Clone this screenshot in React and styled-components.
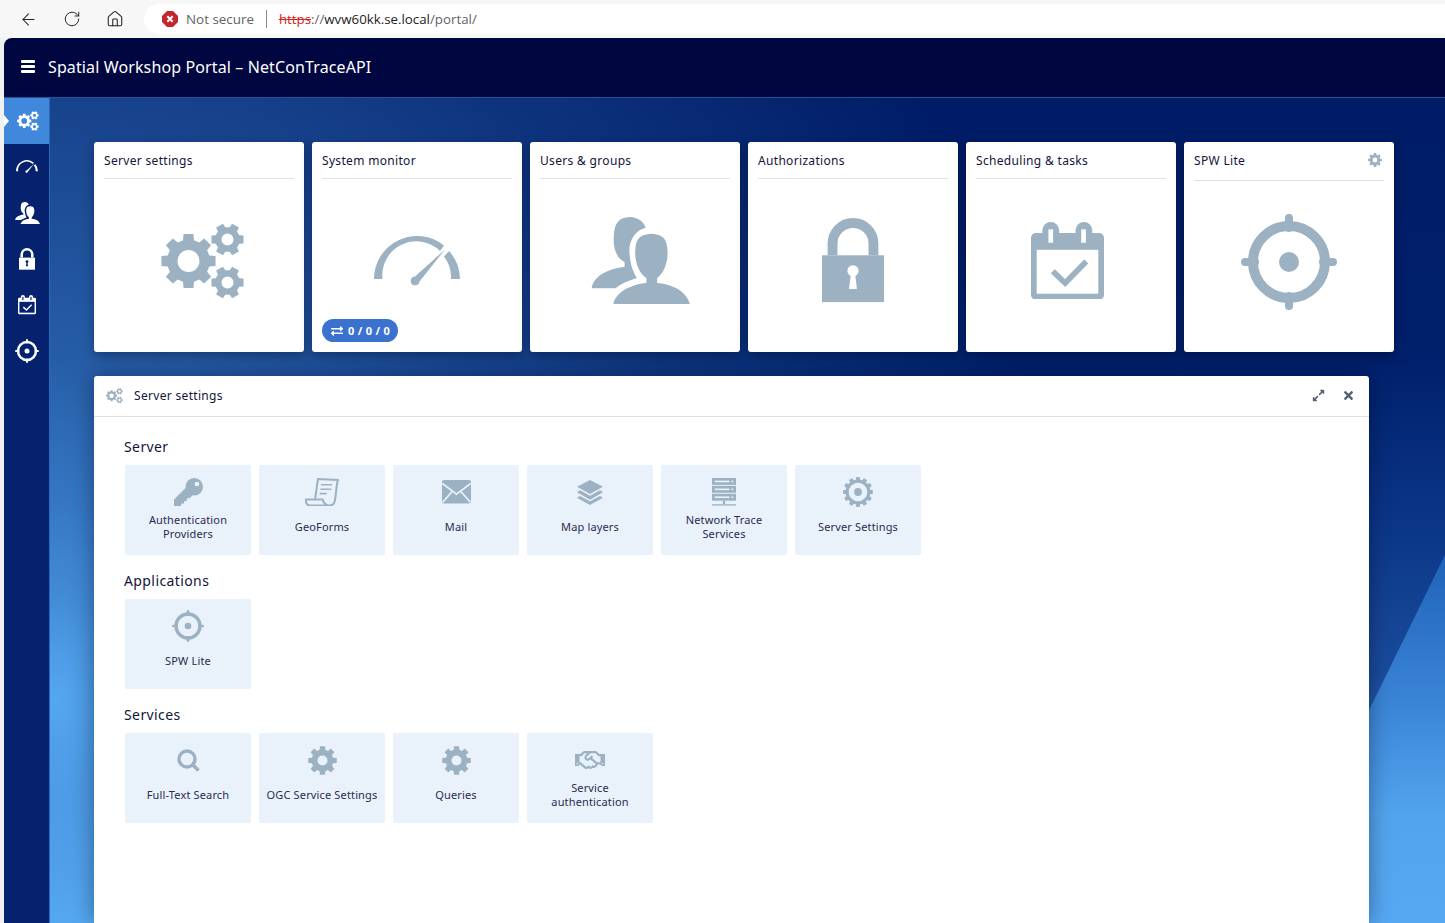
import React from 'react';
import styled, { createGlobalStyle } from 'styled-components';
import { ArrowLeft, RotateCw, Home } from 'lucide-react';
import { FaExchangeAlt, FaExpandAlt, FaTimes, FaRegHandshake } from 'react-icons/fa';

const GlobalStyle = createGlobalStyle`
  html, body {
    margin: 0;
    padding: 0;
    height: 100%;
    overflow: hidden;
    font-family: "Noto Sans", "Open Sans", sans-serif;
  }
  * {
    box-sizing: border-box;
  }
`;

const ICON = '#9cb2c3';
const TILE = '#e9f2fb';

// builds a toothed wheel outline, with a hole when one is given
function gearPath(cx, cy, outer, inner, teeth, hole, offset = 0) {
  const step = (Math.PI * 2) / teeth;
  const pts = [];
  for (let i = 0; i < teeth; i++) {
    const a = offset + i * step - Math.PI / 2;
    const w = step * 0.23;
    const f = step * 0.33;
    pts.push([a - f, inner], [a - w, outer], [a + w, outer], [a + f, inner]);
  }
  const d = pts
    .map(([a, r], i) => `${i ? 'L' : 'M'}${(cx + r * Math.cos(a)).toFixed(2)} ${(cy + r * Math.sin(a)).toFixed(2)}`)
    .join(' ');
  const h = hole ? ` M${cx - hole} ${cy} a${hole} ${hole} 0 1 0 ${hole * 2} 0 a${hole} ${hole} 0 1 0 ${-hole * 2} 0Z` : '';
  return `${d}Z${h}`;
}

const Gears = ({ size, color = ICON }) => (
  <svg width={size} viewBox="0 0 84 76" fill={color} fillRule="evenodd">
    <path d={gearPath(27.5, 38, 27.5, 21.5, 8, 11)} />
    <path d={gearPath(66.5, 16.5, 16.5, 12.5, 6, 6, Math.PI / 6)} />
    <path d={gearPath(66.5, 59.5, 16.5, 12.5, 6, 6, Math.PI / 6)} />
  </svg>
);

const Gauge = ({ size, color = ICON }) => (
  <svg width={size} viewBox="0 0 86 52" fill={color}>
    <path d="M0 44 A43 43 0 0 1 70 10.5 L66 16 A34 34 0 0 0 8.5 44Z" />
    <path d="M75 16 A43 43 0 0 1 86 44 L77 44 A34 34 0 0 0 70 21.5Z" />
    <path d="M41 41.5 L71 14.5 L45.5 46.5 A4.4 4.4 0 1 1 41 41.5Z" />
  </svg>
);

const Users = ({ size, color = ICON }) => (
  <svg width={size} viewBox="0 0 295 262" fill={color}>
    <path d="M2 212 C8 175 50 155 100 148 L100 135 C75 120 65 95 68 55 C70 15 85 2 115 0 C140 0 158 15 163 32 C130 40 110 75 115 110 C117 140 125 165 137 182 C110 190 88 200 73 212Z" />
    <path d="M66 262 C72 225 120 200 165 197 L165 182 C140 165 130 130 132 100 C133 65 145 52 180 50 C215 52 226 65 228 100 C230 130 220 165 197 182 L197 197 C245 200 288 225 295 262Z" />
  </svg>
);

const Lock = ({ size, color = ICON, hole = '#fff' }) => (
  <svg width={size} viewBox="0 0 188 255">
    <path d="M32 113 V77 A62 62 0 0 1 156 77 V113" fill="none" stroke={color} strokeWidth="30" />
    <rect y="113" width="188" height="142" fill={color} />
    <circle cx="94" cy="160" r="17" fill={hole} />
    <path d="M88 165 H100 L106 215 H82Z" fill={hole} />
  </svg>
);

const Calendar = ({ size, color = ICON, hole = '#fff' }) => (
  <svg width={size} viewBox="0 0 218 232">
    <rect y="33" width="218" height="199" rx="14" fill={color} />
    <rect x="17" y="83" width="184" height="131" fill={hole} />
    <rect x="34" width="50" height="70" rx="25" fill={color} />
    <rect x="133" width="50" height="70" rx="25" fill={color} />
    <rect x="52" y="22" width="14" height="40" fill={hole} />
    <rect x="150" y="22" width="14" height="40" fill={hole} />
    <path d="M65 147 L102 182 L165 118" fill="none" stroke={color} strokeWidth="17" />
  </svg>
);

const Target = ({ size, color = ICON }) => (
  <svg width={size} viewBox="0 0 96 96">
    <circle cx="48" cy="48" r="36" fill="none" stroke={color} strokeWidth="10" />
    <circle cx="48" cy="48" r="10" fill={color} />
    <path d="M48 4 V14 M48 82 V92 M4 48 H14 M82 48 H92" stroke={color} strokeWidth="8" strokeLinecap="round" />
  </svg>
);

const Cog = ({ size, color = ICON }) => (
  <svg width={size} viewBox="0 0 58 58" fill={color} fillRule="evenodd">
    <path d={gearPath(29, 29, 29, 22, 8, 10)} />
  </svg>
);

const GearRing = ({ size, color = ICON }) => (
  <svg width={size} viewBox="0 0 58 58" fill={color}>
    <path fillRule="evenodd" d={gearPath(29, 29, 29, 24, 12, 18, 0)} />
    <circle cx="29" cy="29" r="7.5" />
  </svg>
);

const Key = ({ size }) => (
  <svg width={size} viewBox="0 0 86 84" fill={ICON}>
    <path fillRule="evenodd" d="M60 0 A26 26 0 1 1 60 52 A26 26 0 1 1 60 0Z M68 11 A7 7 0 1 0 68 25 A7 7 0 1 0 68 11Z" />
    <path d="M42 22 L0 64 V84 H20 L22 76 H30 V68 H38 V60 H46 L64 42Z" />
  </svg>
);

const Scroll = ({ size }) => (
  <svg width={size} viewBox="0 0 100 84" fill="none" stroke={ICON} strokeWidth="6">
    <path d="M30 60 L38 3 L97 6 C92 20 92 45 88 66 C86 78 78 82 68 81 H16 C7 81 1 74 3 63 H52 C54 72 60 78 68 81" />
    <path d="M47 20 H80 M45 33 H78 M43 46 H64" strokeWidth="4.5" />
  </svg>
);

const Mail = ({ size }) => (
  <svg width={size} viewBox="0 0 86 70">
    <rect width="86" height="70" rx="6" fill={ICON} />
    <path d="M1 10 L43 42 L85 10 M2 66 L30 34 M84 66 L56 34" fill="none" stroke={TILE} strokeWidth="5" />
  </svg>
);

const Layers = ({ size }) => (
  <svg width={size} viewBox="0 0 78 75" fill={ICON}>
    <path d="M39 0 L78 20 L39 42 L0 20Z" />
    <path d="M9 31 L39 47 L69 31 L78 37 L39 59 L0 37Z" />
    <path d="M9 48 L39 64 L69 48 L78 53 L39 75 L0 53Z" />
  </svg>
);

const Rack = ({ y }) => (
  <>
    <rect y={y} width="73" height="21" fill={ICON} />
    <rect x="8" y={y + 8} width="45" height="5" fill={TILE} />
    <circle cx="62" cy={y + 10.5} r="3" fill={TILE} />
  </>
);

const Servers = ({ size }) => (
  <svg width={size} viewBox="0 0 73 85" fill={ICON}>
    <Rack y={0} />
    <Rack y={24} />
    <Rack y={48} />
    <rect x="33" y="69" width="7" height="11" />
    <rect y="80" width="73" height="4" />
  </svg>
);

const Search = ({ size }) => (
  <svg width={size} viewBox="0 0 23 23" fill="none" stroke={ICON}>
    <circle cx="10" cy="10" r="8" strokeWidth="3.4" />
    <path d="M15.5 15.5 L21.5 21.5" strokeWidth="3.6" />
  </svg>
);

const NotSecure = () => (
  <svg width="16" height="16" viewBox="0 0 16 16">
    <path d="M5 0 H11 L16 5 V11 L11 16 H5 L0 11 V5Z" fill="#c4262e" />
    <path d="M5.3 5.3 L10.7 10.7 M10.7 5.3 L5.3 10.7" stroke="#fff" strokeWidth="2" />
  </svg>
);

const Burger = () => (
  <svg width="14" height="13" viewBox="0 0 14 13" fill="#fff">
    <rect width="14" height="3" rx="1" />
    <rect y="5" width="14" height="3" rx="1" />
    <rect y="10" width="14" height="3" rx="1" />
  </svg>
);

const Page = styled.div`
  display: flex;
  flex-direction: column;
  height: 100vh;
  overflow: hidden;
  background: #f1f1f1;
`;

const BrowserBar = styled.div`
  display: flex;
  align-items: center;
  flex: 0 0 38px;
  padding: 4px 0 4px 19px;
  background: #f7f7f7;
  color: #222;
`;

const NavIcons = styled.div`
  display: flex;
  align-items: center;
  gap: 25px;
  width: 125px;
`;

const AddressBar = styled.div`
  display: flex;
  align-items: center;
  flex: 1;
  height: 30px;
  padding-left: 18px;
  background: #fff;
  border-radius: 15px 0 0 15px;
  font-family: "Open Sans", sans-serif;
  font-size: 13.3px;
  color: #5f6368;
`;

const Insecure = styled.span`
  margin-left: 8px;
  padding-right: 12px;
  margin-right: 12px;
  font-size: 13.4px;
  line-height: 18px;
  border-right: 1px solid #8a8a8a;
`;

const Scheme = styled.span`
  color: #d6231c;
  text-decoration: line-through;
`;

const Host = styled.span`
  color: #222;
`;

const AppFrame = styled.div`
  display: flex;
  flex-direction: column;
  flex: 1;
  min-height: 0;
  margin-left: 4px;
  border-radius: 8px 0 0 0;
  overflow: hidden;
`;

const Header = styled.header`
  display: flex;
  align-items: center;
  gap: 13px;
  flex: 0 0 60px;
  padding: 0 0 2px 17px;
  background: #00063f;
  border-bottom: 1px solid #1e5299;
  color: #fff;
  font-size: 16px;
  letter-spacing: 0.12px;
`;

const Body = styled.div`
  display: flex;
  flex: 1;
  min-height: 0;
`;

const Sidebar = styled.nav`
  display: flex;
  flex-direction: column;
  flex: 0 0 46px;
  background: #06226f;
  border-right: 1px solid #2a69c0;
`;

const SideItem = styled.div`
  position: relative;
  display: flex;
  align-items: center;
  justify-content: center;
  height: 46px;
  padding-left: ${(p) => p.$nudge || 0}px;
  color: #fff;
  background: ${(p) => (p.$active ? '#3f88dc' : 'transparent')};

  ${(p) =>
    p.$active &&
    `&::before {
      content: '';
      position: absolute;
      left: 0;
      top: 17px;
      border-left: 5px solid #fff;
      border-top: 6px solid transparent;
      border-bottom: 6px solid transparent;
    }`}
`;

const Main = styled.main`
  position: relative;
  display: flex;
  flex-direction: column;
  flex: 1;
  min-width: 0;
  padding: 44px 0 0 44px;
  background:
    radial-gradient(
      1100px 1300px at 0 73%,
      rgba(85, 168, 240, 1) 0,
      rgba(85, 168, 240, 0.72) 8%,
      rgba(85, 168, 240, 0.58) 15%,
      rgba(85, 168, 240, 0.45) 26%,
      rgba(85, 168, 240, 0.28) 46%,
      rgba(85, 168, 240, 0.16) 62%,
      rgba(85, 168, 240, 0) 92%
    ),
    linear-gradient(180deg, #001c66 0%, #00206c 32%, #0a3485 50%, #1a4c9c 70%, #55a8f0 100%);
  overflow: hidden;

  &::before {
    content: '';
    position: absolute;
    inset: 0;
    background: linear-gradient(180deg, #1f62b8 55%, #3a84d6 73%, #52a4ee 87%, #55a8f2 100%);
    clip-path: polygon(100% 457px, 100% 100%, 1215px 100%);
  }
`;

const CardRow = styled.div`
  position: relative;
  display: flex;
  gap: 8px;
  margin-bottom: 24px;
`;

const Card = styled.section`
  position: relative;
  display: flex;
  flex-direction: column;
  flex: 0 0 210px;
  height: 210px;
  padding: 0 10px 10px;
  background: #fff;
  border-radius: 3px;
  box-shadow: 0 4px 12px rgba(0, 0, 30, 0.35);
`;

const CardHead = styled.div`
  display: flex;
  align-items: center;
  justify-content: space-between;
  flex: 0 0 ${(p) => (p.$hasAction ? '39px' : '37px')};
  padding-bottom: ${(p) => (p.$hasAction ? '2px' : '0')};
  border-bottom: 1px solid #dedfe8;
  font-size: 12px;
  letter-spacing: 0.32px;
  color: #14143c;
  svg {
    margin-right: 2px;
  }
`;

const CardIcon = styled.div`
  display: flex;
  align-items: center;
  justify-content: center;
  flex: 1;
  padding-left: ${(p) => p.$left || 0}px;
  padding-right: ${(p) => p.$right || 0}px;
`;

const Badge = styled.div`
  position: absolute;
  left: 10px;
  bottom: 10px;
  display: flex;
  align-items: center;
  gap: 5px;
  height: 23px;
  padding: 0 7px 0 9px;
  background: #3b72d0;
  border-radius: 12px;
  color: #fff;
  font-size: 11px;
  font-weight: 700;
  letter-spacing: 0.8px;
  word-spacing: -1px;
`;

const Panel = styled.section`
  position: relative;
  display: flex;
  flex-direction: column;
  flex: 1;
  width: 1275px;
  background: #fff;
  border-radius: 3px 3px 0 0;
  box-shadow: 0 0 22px rgba(0, 0, 30, 0.4);
`;

const PanelHead = styled.div`
  display: flex;
  align-items: center;
  gap: 11px;
  flex: 0 0 41px;
  padding: 0 14px 1px 12px;
  border-bottom: 1px solid #dedfe8;
  font-size: 12px;
  letter-spacing: 0.32px;
  color: #14143c;
`;

const PanelTools = styled.div`
  display: flex;
  align-items: center;
  gap: 17px;
  margin-left: auto;
  color: #566273;
`;

const PanelBody = styled.div`
  padding: 20px 30px 0;
`;

const SectionTitle = styled.h3`
  margin: 0 0 8px;
  font-size: 14px;
  font-weight: 400;
  line-height: 20px;
  letter-spacing: 0.4px;
  color: #14143c;
`;

const TileGrid = styled.div`
  display: flex;
  gap: 8px;
  margin: 0 0 16px 1px;
`;

const Tile = styled.div`
  display: flex;
  flex-direction: column;
  align-items: center;
  flex: 0 0 126px;
  height: 90px;
  padding: 0 4px;
  background: ${TILE};
  border-radius: 2px;
`;

const TileIcon = styled.div`
  display: flex;
  align-items: center;
  justify-content: center;
  flex: 0 0 54px;
`;

const TileLabel = styled.div`
  display: flex;
  align-items: center;
  text-align: center;
  height: 28px;
  max-width: ${(p) => (p.$narrow ? '90px' : 'none')};
  margin-top: -6px;
  font-size: 11px;
  line-height: 14px;
  letter-spacing: 0.15px;
  color: #2b2b50;
`;

const CARDS = [
  { title: 'Server settings', icon: <Gears size={84} />, left: 8 },
  { title: 'System monitor', icon: <Gauge size={86} />, badge: '0 / 0 / 0' },
  { title: 'Users & groups', icon: <Users size={99} />, left: 10 },
  { title: 'Authorizations', icon: <Lock size={62} /> },
  { title: 'Scheduling & tasks', icon: <Calendar size={73} />, right: 7 },
  { title: 'SPW Lite', icon: <Target size={96} />, action: true },
];

const SECTIONS = [
  {
    title: 'Server',
    tiles: [
      { label: 'Authentication Providers', icon: <Key size={29} />, narrow: true },
      { label: 'GeoForms', icon: <Scroll size={34} /> },
      { label: 'Mail', icon: <Mail size={29} /> },
      { label: 'Map layers', icon: <Layers size={26} /> },
      { label: 'Network Trace Services', icon: <Servers size={24} />, narrow: true },
      { label: 'Server Settings', icon: <GearRing size={30} /> },
    ],
  },
  {
    title: 'Applications',
    tiles: [{ label: 'SPW Lite', icon: <Target size={32} /> }],
  },
  {
    title: 'Services',
    tiles: [
      { label: 'Full-Text Search', icon: <Search size={23} /> },
      { label: 'OGC Service Settings', icon: <Cog size={29} /> },
      { label: 'Queries', icon: <Cog size={29} /> },
      { label: 'Service authentication', icon: <FaRegHandshake size={30} color={ICON} />, narrow: true },
    ],
  },
];

export default function App() {
  return (
    <>
      <GlobalStyle />
      <Page>
        <BrowserBar>
          <NavIcons>
            <ArrowLeft size={19} strokeWidth={1.3} />
            <RotateCw size={18} strokeWidth={1.3} />
            <Home size={18} strokeWidth={1.4} />
          </NavIcons>
          <AddressBar>
            <NotSecure />
            <Insecure>Not secure</Insecure>
            <Scheme>https</Scheme>://<Host>wvw60kk.se.local</Host>/portal/
          </AddressBar>
        </BrowserBar>
        <AppFrame>
          <Header>
            <Burger />
            Spatial Workshop Portal – NetConTraceAPI
          </Header>
          <Body>
            <Sidebar>
              <SideItem $active $nudge={3}>
                <Gears size={22} color="#fff" />
              </SideItem>
              <SideItem>
                <Gauge size={22} color="#fff" />
              </SideItem>
              <SideItem $nudge={2}>
                <Users size={25} color="#fff" />
              </SideItem>
              <SideItem>
                <Lock size={16} color="#fff" hole="#06226f" />
              </SideItem>
              <SideItem>
                <Calendar size={18} color="#fff" hole="#06226f" />
              </SideItem>
              <SideItem>
                <Target size={24} color="#fff" />
              </SideItem>
            </Sidebar>
            <Main>
              <CardRow>
                {CARDS.map((c) => (
                  <Card key={c.title}>
                    <CardHead $hasAction={c.action}>
                      {c.title}
                      {c.action && <Cog size={14} />}
                    </CardHead>
                    <CardIcon $left={c.left} $right={c.right}>
                      {c.icon}
                    </CardIcon>
                    {c.badge && (
                      <Badge>
                        <FaExchangeAlt size={12} />
                        {c.badge}
                      </Badge>
                    )}
                  </Card>
                ))}
              </CardRow>
              <Panel>
                <PanelHead>
                  <Gears size={17} />
                  Server settings
                  <PanelTools>
                    <FaExpandAlt size={13} />
                    <FaTimes size={13} />
                  </PanelTools>
                </PanelHead>
                <PanelBody>
                  {SECTIONS.map((s) => (
                    <div key={s.title}>
                      <SectionTitle>{s.title}</SectionTitle>
                      <TileGrid>
                        {s.tiles.map((t) => (
                          <Tile key={t.label}>
                            <TileIcon>{t.icon}</TileIcon>
                            <TileLabel $narrow={t.narrow}>{t.label}</TileLabel>
                          </Tile>
                        ))}
                      </TileGrid>
                    </div>
                  ))}
                </PanelBody>
              </Panel>
            </Main>
          </Body>
        </AppFrame>
      </Page>
    </>
  );
}
